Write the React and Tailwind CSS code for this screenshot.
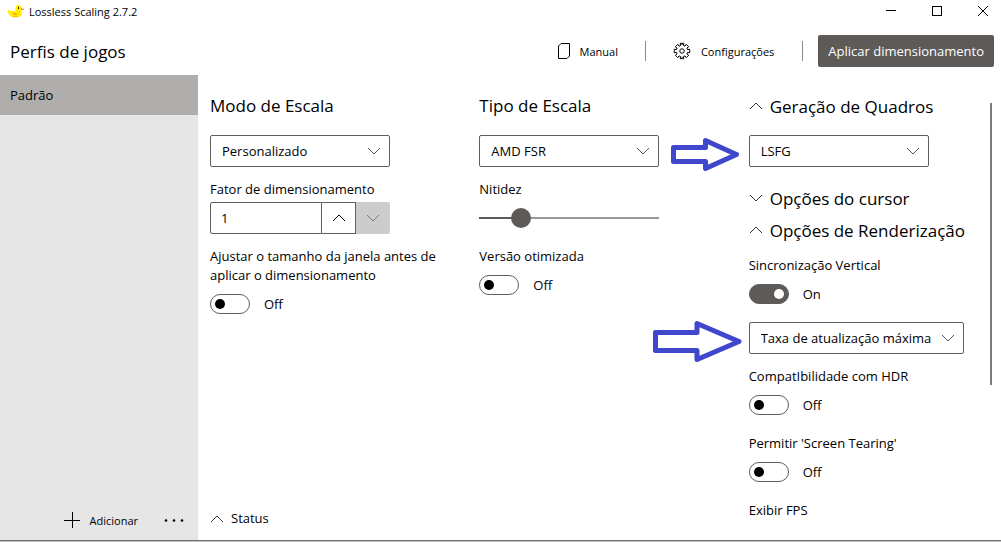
import React, { useState } from 'react'

const Chevron = ({ up = false, className = '' }) => (
  <svg viewBox="0 0 14 8" className={`h-2 w-3.5 shrink-0 ${className}`} fill="none" stroke="currentColor">
    <path d={up ? 'M1 7 L7 1 L13 7' : 'M1 1 L7 7 L13 1'} />
  </svg>
)

const DuckLogo = () => (
  <svg viewBox="0 0 16 13" className="h-[13px] w-4">
    <path d="M0 4.5 L3 6 H7.5 V3 Q7.5 0 10.5 0 Q13.5 0 13.5 3 V7 Q14 12 9.5 12 H5 Q0 11.5 0 4.5Z" fill="#ffee00" />
    <path d="M4 8 H8 L10 9 L8 10.5 L5 9.5Z" fill="#ffb300" />
    <path d="M13 3 L16 4 L16 5 H13Z" fill="#ff8a2a" />
    <path d="M3 11 H10.5 L9.5 12.3 H5Z" fill="#f7c400" />
    <rect x="10" y="2" width="1" height="2" fill="#222" />
  </svg>
)

const GearIcon = () => (
  <svg viewBox="0 0 24 24" className="h-[18px] w-[18px]" fill="none" stroke="currentColor" strokeWidth="1.3" strokeLinejoin="round">
    <path d="M10.2 4.6 L9.6 1.8 L11 1.4 L12 3.4 L13 1.4 L14.4 1.8 L13.8 4.6 L16 5.5 L17.6 3.1 L20.9 6.4 L18.5 8 L19.4 10.2 L22.3 9.7 V14.3 L19.4 13.8 L18.5 16 L20.9 17.6 L17.6 20.9 L16 18.5 L13.8 19.4 L14.4 22.2 L13 22.6 L12 20.6 L11 22.6 L9.6 22.2 L10.2 19.4 L8 18.5 L6.4 20.9 L3.1 17.6 L5.5 16 L4.6 13.8 L1.7 14.3 V9.7 L4.6 10.2 L5.5 8 L3.1 6.4 L6.4 3.1 L8 5.5Z" />
    <circle cx="12" cy="12" r="3" />
  </svg>
)

const Combo = ({ label, options, className = 'w-[180px]', children }) => (
  <div className={`relative h-8 ${className}`}>
    {children}
    <select
      aria-label={label}
      className="h-8 w-full appearance-none rounded-xs border border-[#605e5c] bg-white pr-8 pl-[11px] text-[13px]"
    >
      {options.map((option) => (
        <option key={option}>{option}</option>
      ))}
    </select>
    <Chevron className="pointer-events-none absolute top-3 right-[9px] text-[#555]" />
  </div>
)

const Toggle = ({ label, defaultOn = false }) => {
  const [on, setOn] = useState(defaultOn)

  return (
    <label className="block">
      <span className="block">{label}</span>
      <span className="mt-[9px] flex h-5 items-center gap-3.5">
        <input
          type="checkbox"
          role="switch"
          checked={on}
          onChange={(e) => setOn(e.target.checked)}
          className="flex h-5 w-10 appearance-none items-center rounded-full border border-[#605e5c] px-1 before:h-2.5 before:w-2.5 before:rounded-full before:bg-black checked:justify-end checked:bg-[#5d5a58] checked:before:bg-white"
        />
        <span>{on ? 'On' : 'Off'}</span>
      </span>
    </label>
  )
}

const SectionButton = ({ open, children }) => (
  <button type="button" aria-expanded={open} className="flex h-8 items-center gap-[7px] text-[17px] whitespace-nowrap">
    <Chevron up={open} className="text-[#333]" />
    {children}
  </button>
)

const App = () => {
  const [factor, setFactor] = useState(1)
  const [sharpness, setSharpness] = useState(2)

  return (
    <div className="flex min-h-screen flex-col border-b border-[#c4c4c4] bg-white font-['Open_Sans',sans-serif] text-[13px] leading-[19px] text-black">
      <header>
        <div className="flex h-[22px] items-center justify-between pr-[13px] pl-2">
          <div className="flex items-center gap-[5px] text-[11px]">
            <DuckLogo />
            <span>Lossless Scaling 2.7.2</span>
          </div>
          <div className="flex items-center gap-9">
            <button type="button" aria-label="Minimizar">
              <svg viewBox="0 0 10 10" className="h-2.5 w-2.5" stroke="currentColor"><path d="M0 4.5 H10" /></svg>
            </button>
            <button type="button" aria-label="Maximizar">
              <svg viewBox="0 0 10 10" className="h-2.5 w-2.5" fill="none" stroke="currentColor"><rect x="0.5" y="0.5" width="9" height="9" /></svg>
            </button>
            <button type="button" aria-label="Fechar">
              <svg viewBox="0 0 10 10" className="h-2.5 w-2.5" stroke="currentColor"><path d="M0 0 L10 10 M10 0 L0 10" /></svg>
            </button>
          </div>
        </div>

        <div className="flex items-center justify-between pt-[13px] pr-[7px] pb-2 pl-2.5">
          <h1 className="text-[17px]">Perfis de jogos</h1>
          <div className="flex items-center text-[11px]">
            <button type="button" className="flex items-center gap-2.5">
              <svg viewBox="0 0 12 16" className="h-4 w-3" fill="none" stroke="currentColor">
                <path d="M3 0.5 H11.5 V13 L9 15.5 H0.5 V3Z" />
              </svg>
              Manual
            </button>
            <span className="mx-[27px] h-5 w-px bg-[#8a8a8a]" />
            <button type="button" className="flex items-center gap-2.5">
              <GearIcon />
              Configurações
            </button>
            <span className="mr-[15px] ml-7 h-5 w-px bg-[#8a8a8a]" />
            <button type="button" className="h-8 rounded-xs bg-[#5d5a58] px-2.5 text-[13px] text-white">
              Aplicar dimensionamento
            </button>
          </div>
        </div>
      </header>

      <div className="flex flex-1 border-b border-[#6e6e6e]">
        <aside className="flex w-[198px] shrink-0 flex-col justify-between bg-[#e6e6e6]">
          <button type="button" className="h-10 w-full bg-[#afaeac] px-2.5 text-left">Padrão</button>
          <div className="flex h-10 items-center justify-end gap-[26px] pr-3.5 text-[11px]">
            <button type="button" className="flex items-center gap-2.5">
              <svg viewBox="0 0 16 16" className="h-4 w-4" stroke="currentColor"><path d="M8.5 0 V16 M0 8.5 H16" /></svg>
              Adicionar
            </button>
            <button type="button" aria-label="Mais opções">
              <svg viewBox="0 0 20 4" className="h-1 w-5" fill="currentColor">
                <circle cx="2" cy="2.5" r="1.3" />
                <circle cx="10" cy="2.5" r="1.3" />
                <circle cx="18" cy="2.5" r="1.3" />
              </svg>
            </button>
          </div>
        </aside>

        <main className="relative grid flex-1 grid-cols-3 gap-10 pt-[15px] pr-[23px] pl-3">
          <div className="col-span-2 flex flex-col justify-between">
            <div className="grid grid-cols-2 gap-10">
              <section>
                <h2 className="mb-[13px] text-[17px] leading-8">Modo de Escala</h2>
                <Combo label="Modo de Escala" options={['Personalizado', 'Automático']} />
                <label htmlFor="factor" className="mt-[13px] mb-[3px] block">Fator de dimensionamento</label>
                <div className="mb-[13px] flex h-8 w-[180px]">
                  <input
                    id="factor"
                    type="text"
                    value={factor}
                    onChange={(e) => setFactor(e.target.value)}
                    className="w-28 rounded-l-xs border border-[#605e5c] px-2.5"
                  />
                  <button
                    type="button"
                    aria-label="Aumentar"
                    onClick={() => setFactor(Number(factor) + 1)}
                    className="flex w-[34px] items-center justify-center border-y border-r border-[#605e5c]"
                  >
                    <Chevron up />
                  </button>
                  <button type="button" aria-label="Diminuir" disabled className="flex w-[34px] items-center justify-center rounded-r-xs bg-[#cccccc] text-[#7a7a7a]">
                    <Chevron />
                  </button>
                </div>
                <Toggle label="Ajustar o tamanho da janela antes de aplicar o dimensionamento" />
              </section>

              <section>
                <h2 className="mb-[13px] text-[17px] leading-8">Tipo de Escala</h2>
                <Combo label="Tipo de Escala" options={['AMD FSR', 'LS1', 'NIS']} />
                <label htmlFor="sharpness" className="mt-[13px] mb-[3px] block">Nitidez</label>
                <div className="mb-[13px] flex h-8 items-center">
                  <input
                    id="sharpness"
                    type="range"
                    min="0"
                    max="10"
                    value={sharpness}
                    onChange={(e) => setSharpness(Number(e.target.value))}
                    style={{ backgroundSize: `${sharpness * 10}% 2px, 100% 2px` }}
                    className="h-5 w-[180px] appearance-none bg-[linear-gradient(#5d5a58,#5d5a58),linear-gradient(#999,#999)] bg-[position:left_center] bg-no-repeat [&::-webkit-slider-thumb]:h-5 [&::-webkit-slider-thumb]:w-5 [&::-webkit-slider-thumb]:appearance-none [&::-webkit-slider-thumb]:rounded-full [&::-webkit-slider-thumb]:bg-[#5d5a58]"
                  />
                </div>
                <Toggle label="Versão otimizada" />
              </section>
            </div>

            <button type="button" className="mb-3 flex items-center gap-[7px] self-start">
              <Chevron up className="text-[#444]" />
              Status
            </button>
          </div>

          <section className="pb-5">
            <SectionButton open>Geração de Quadros</SectionButton>
            <div className="mt-[13px] mb-[15px]">
              <Combo label="Geração de Quadros" options={['LSFG', 'Desligado']}>
                <svg viewBox="0 0 68 34" className="absolute top-[3px] right-full mr-2.5 h-[34px] w-[68px]" fill="none" stroke="#3f48cc" strokeWidth="5" strokeLinejoin="round">
                  <path d="M2.5 9.5 H34.5 V2.5 L65.5 16.5 L34.5 30.5 V23.5 H2.5Z" />
                </svg>
              </Combo>
            </div>
            <SectionButton open={false}>Opções do cursor</SectionButton>
            <SectionButton open>Opções de Renderização</SectionButton>
            <div className="mt-2.5">
              <Toggle label="Sincronização Vertical" defaultOn />
              <div className="mt-[18px] mb-[13px]">
                <Combo label="Taxa de atualização" options={['Taxa de atualização máxima']} className="w-[215px]">
                  <svg viewBox="0 0 90 42" className="absolute -top-px right-full mr-[7px] h-[42px] w-[90px]" fill="none" stroke="#3f48cc" strokeWidth="5" strokeLinejoin="round">
                    <path d="M3.5 11.5 H45 V2.5 L87 20.5 L45 38.5 V29.5 H3.5Z" />
                  </svg>
                </Combo>
              </div>
              <div className="space-y-[19px]">
                <Toggle label="CompatIbilidade com HDR" />
                <Toggle label="Permitir 'Screen Tearing'" />
                <p>Exibir FPS</p>
              </div>
            </div>
          </section>

          {/* scroll thumb */}
          <div className="absolute top-7 right-[9px] h-[282px] w-0.5 bg-[#7a7a7a]" />
        </main>
      </div>
    </div>
  )
}

export default App
